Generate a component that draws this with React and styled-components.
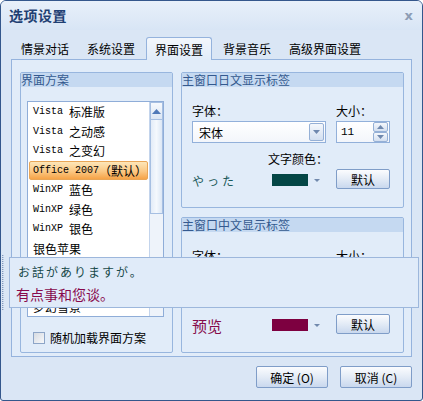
import React from 'react';
import styled, { createGlobalStyle } from 'styled-components';

const Global = createGlobalStyle`
  html, body { margin: 0; padding: 0; background: #ffffff; }
  * { box-sizing: border-box; }
`;

const cjk = `"Noto Sans CJK SC", "DejaVu Sans", sans-serif`;

// window frame
const Window = styled.div`
  position: relative;
  width: 423px;
  height: 401px;
  border: 1px solid #34578c;
  border-radius: 6px 6px 3px 3px;
  background: #dae6f5;
  font-family: ${cjk};
  font-size: 12px;
  color: #000;
  display: flex;
  flex-direction: column;
  overflow: hidden;
`;

const TitleBar = styled.div`
  height: 29px;
  flex: none;
  display: flex;
  align-items: center;
  justify-content: space-between;
  padding: 0 9px 1px 8px;
  background: linear-gradient(#e8f0fa, #d8e5f5);
`;

const Title = styled.span`
  font-size: 14px;
  font-weight: bold;
  color: #1f3f73;
  letter-spacing: 0.5px;
`;

const Close = styled.span`
  font-family: "DejaVu Sans", sans-serif;
  font-size: 13px;
  font-weight: bold;
  color: #8d9db5;
`;

const TabStrip = styled.div`
  height: 29px;
  flex: none;
  display: flex;
  align-items: flex-end;
  gap: 4px;
  padding-left: 13px;
  position: relative;
  z-index: 1;
`;

const Tab = styled.div`
  height: ${p => (p.$active ? '23px' : '22px')};
  padding: 0 ${p => (p.$active ? '8px' : '6px')};
  display: flex;
  align-items: center;
  font-size: 12px;
  margin-bottom: ${p => (p.$active ? '-1px' : '0')};
  border: 1px solid ${p => (p.$active ? '#95b3dd' : 'transparent')};
  border-bottom: none;
  border-radius: 3px 3px 0 0;
  background: ${p => (p.$active ? 'linear-gradient(#f3f7fc, #e1ecf9)' : 'transparent')};
`;

const TabPanel = styled.div`
  margin-left: 10px;
  width: 401px;
  height: 298px;
  flex: none;
  border: 1px solid #95b3dd;
  background: #e1ecf9;
  display: flex;
  gap: 8px;
  padding: 12px 0 0 8px;
`;

const Group = styled.div`
  width: ${p => p.$w}px;
  height: ${p => p.$h}px;
  border: 1px solid #98b6de;
  border-radius: 2px;
  display: flex;
  flex-direction: column;
`;

const GroupHeader = styled.div`
  height: 14px;
  line-height: 14px;
  background: #c5d9f1;
  color: #34598f;
  font-size: 12px;
  flex: none;
`;

const RightColumn = styled.div`
  display: flex;
  flex-direction: column;
  gap: 9px;
`;

/* left group: list of schemes */
const ListBox = styled.div`
  margin: 14px 0 0 6px;
  width: 137px;
  height: 216px;
  border: 1px solid #8fadd8;
  background: #ffffff;
  display: flex;
  overflow: hidden;
`;

const ListItems = styled.div`
  flex: 1;
  padding: 0 1px;
`;

const Item = styled.div`
  height: 19.5px;
  display: flex;
  align-items: center;
  padding-left: 3px;
  white-space: nowrap;
  font-size: 12px;
  border: 1px solid ${p => (p.$selected ? '#e9a657' : 'transparent')};
  border-radius: 2px;
  background: ${p => (p.$selected ? 'linear-gradient(#fde6b8, #fbc884 55%, #f6a347)' : 'transparent')};
`;

const Mono = styled.span`
  font-family: "Liberation Mono", monospace;
  font-size: ${p => p.$size || 10}px;
  white-space: pre;
`;

const ScrollBar = styled.div`
  width: 17px;
  border-left: 1px solid #c3d4ec;
  background: #eef3fa;
  display: flex;
  flex-direction: column;
`;

const ScrollBtn = styled.div`
  height: 18px;
  flex: none;
  border: 1px solid #a6bfe2;
  background: linear-gradient(#f6f9fd, #dbe6f4);
  display: flex;
  align-items: center;
  justify-content: center;
`;

const Thumb = styled.div`
  height: 94px;
  flex: none;
  border: 1px solid #a6bfe2;
  border-top: none;
  background: linear-gradient(90deg, #e3ecf8, #f4f8fd 50%, #dce7f5);
`;

const CheckRow = styled.div`
  margin: 12px 0 0 12px;
  display: flex;
  align-items: center;
  gap: 5px;
  font-size: 12px;
`;

const CheckBox = styled.span`
  width: 12px;
  height: 12px;
  border: 1px solid #8da5c7;
  background: linear-gradient(135deg, #d6dbe2, #f7f8fa);
`;

/* right groups */
const Form = styled.div`
  padding: 17px 0 0 10px;
  display: grid;
  grid-template-columns: 134px 54px;
  column-gap: 10px;
`;

const Label = styled.div`
  height: 14px;
  line-height: 14px;
  font-size: 12px;
  padding-left: ${p => p.$indent || 0}px;
  margin-top: ${p => p.$mt || 0}px;
  grid-column: ${p => (p.$wide ? '1 / 3' : 'auto')};
`;

const Combo = styled.div`
  margin-top: 3px;
  height: 22px;
  border: 1px solid #92b0da;
  background: linear-gradient(#ffffff, #f3f6fb);
  display: flex;
  align-items: center;
  justify-content: space-between;
  padding: 0 1px 0 ${p => p.$pl || 6}px;
`;

const SmallBtn = styled.div`
  width: 15px;
  height: ${p => p.$h || 18}px;
  border: 1px solid #95b0d6;
  border-radius: 2px;
  background: linear-gradient(#f4f7fc, #d3dff0);
  display: flex;
  align-items: center;
  justify-content: center;
`;

const SpinBtns = styled.div`
  display: flex;
  flex-direction: column;
`;

const ColorRow = styled.div`
  grid-column: 1;
  margin-top: 4px;
  height: 20px;
  display: flex;
  align-items: center;
`;

const Sample = styled.span`
  width: 80px;
  color: ${p => p.$color};
  font-size: ${p => p.$size}px;
  letter-spacing: ${p => p.$spacing || 0}px;
`;

const Swatch = styled.span`
  width: 36px;
  height: 12px;
  background: ${p => p.$color};
`;

const Caret = styled.span`
  margin-left: 6px;
  width: 0;
  height: 0;
  border-left: 3px solid transparent;
  border-right: 3px solid transparent;
  border-top: 3px solid #7189ad;
`;

const Button = styled.div`
  width: ${p => p.$w || 54}px;
  height: ${p => p.$h || 20}px;
  margin-top: ${p => p.$mt || 0}px;
  border: 1px solid #7f9dc8;
  border-radius: 2px;
  background: linear-gradient(#fbfcfe, #e3ebf6 50%, #c9d8ee);
  display: flex;
  align-items: center;
  justify-content: center;
  font-size: 12px;
`;

const Footer = styled.div`
  flex: 1;
  display: flex;
  justify-content: flex-end;
  align-items: flex-start;
  gap: 12px;
  padding: 9px 10px 0 0;
`;

/* balloon laid over the dialog */
const Grip = styled.div`
  position: absolute;
  left: 1px;
  top: 254px;
  width: 2px;
  height: 55px;
  border-left: 1px dotted #8299bd;
  border-right: 1px dotted #b9c9e0;
`;

const Balloon = styled.div`
  position: absolute;
  left: 8px;
  top: 256px;
  width: 410px;
  height: 51px;
  border: 1px solid #9db7dc;
  background: #e0ebf9;
  padding: 6px 0 0 8px;
`;

const BalloonJa = styled.div`
  color: #164848;
  font-size: 12px;
  letter-spacing: 2px;
  line-height: 16px;
`;

const BalloonZh = styled.div`
  margin-top: 4px;
  margin-left: -2px;
  color: #880a4c;
  font-size: 14px;
  line-height: 20px;
`;

const UpArrow = () => (
  <svg width="9" height="5" viewBox="0 0 9 5"><path d="M0 5 L4.5 0 L9 5 Z" fill="#4f79b8" /></svg>
);
const SpinUp = () => (
  <svg width="7" height="4" viewBox="0 0 7 4"><path d="M0 4 L3.5 0 L7 4 Z" fill="#6f88ae" /></svg>
);
const DownArrow = () => (
  <svg width="7" height="4" viewBox="0 0 7 4"><path d="M0 0 L3.5 4 L7 0 Z" fill="#6f88ae" /></svg>
);

// rows 9 and 10 sit under the balloon and are never seen
const schemes = [
  ['Vista ', '标准版'],
  ['Vista ', '之动感'],
  ['Vista ', '之变幻'],
  ['Office 2007', '（默认）'],
  ['WinXP ', '蓝色'],
  ['WinXP ', '绿色'],
  ['WinXP ', '银色'],
  ['', '银色苹果'],
  ['', ''],
  ['', ''],
  ['', '梦幻雪景'],
];

const LabelGroup = ({ title, sample, color, swatch, size, spacing, colorLabel }) => (
  <Group $w={223} $h={136}>
    <GroupHeader>{title}</GroupHeader>
    <Form>
      <Label>字体：</Label>
      <Label>大小：</Label>
      <Combo>
        <span>宋体</span>
        <SmallBtn><DownArrow /></SmallBtn>
      </Combo>
      <Combo $pl={4}>
        <Mono $size={11}>11</Mono>
        <SpinBtns>
          <SmallBtn $h={10}><SpinUp /></SmallBtn>
          <SmallBtn $h={10}><DownArrow /></SmallBtn>
        </SpinBtns>
      </Combo>
      <Label $indent={76} $mt={9} $wide>{colorLabel}</Label>
      <ColorRow>
        <Sample $color={color} $size={size} $spacing={spacing}>{sample}</Sample>
        <Swatch $color={swatch} />
        <Caret />
      </ColorRow>
      <Button $mt={3}>默认</Button>
    </Form>
  </Group>
);

export default function App() {
  return (
    <Window>
      <Global />
      <TitleBar>
        <Title>选项设置</Title>
        <Close>x</Close>
      </TitleBar>
      <TabStrip>
        <Tab>情景对话</Tab>
        <Tab>系统设置</Tab>
        <Tab $active>界面设置</Tab>
        <Tab>背景音乐</Tab>
        <Tab>高级界面设置</Tab>
      </TabStrip>
      <TabPanel>
        <Group $w={153} $h={281}>
          <GroupHeader>界面方案</GroupHeader>
          <ListBox>
            <ListItems>
              {schemes.map(([latin, zh], i) => (
                <Item key={i} $selected={i === 3}>
                  {latin && <Mono>{latin}</Mono>}
                  {zh}
                </Item>
              ))}
            </ListItems>
            <ScrollBar>
              <ScrollBtn><UpArrow /></ScrollBtn>
              <Thumb />
            </ScrollBar>
          </ListBox>
          <CheckRow>
            <CheckBox />
            随机加载界面方案
          </CheckRow>
        </Group>
        <RightColumn>
          <LabelGroup
            title="主窗口日文显示标签"
            sample="やった"
            color="#1b5a5a"
            swatch="#044646"
            size={12}
            spacing={3}
            colorLabel="文字颜色："
          />
          <LabelGroup
            title="主窗口中文显示标签"
            sample="预览"
            color="#850b4a"
            swatch="#7d0040"
            size={15}
          />
        </RightColumn>
      </TabPanel>
      <Footer>
        <Button $w={72} $h={22}>确定 (O)</Button>
        <Button $w={72} $h={22}>取消 (C)</Button>
      </Footer>
      <Grip />
      <Balloon>
        <BalloonJa>お話がありますが。</BalloonJa>
        <BalloonZh>有点事和您谈。</BalloonZh>
      </Balloon>
    </Window>
  );
}
